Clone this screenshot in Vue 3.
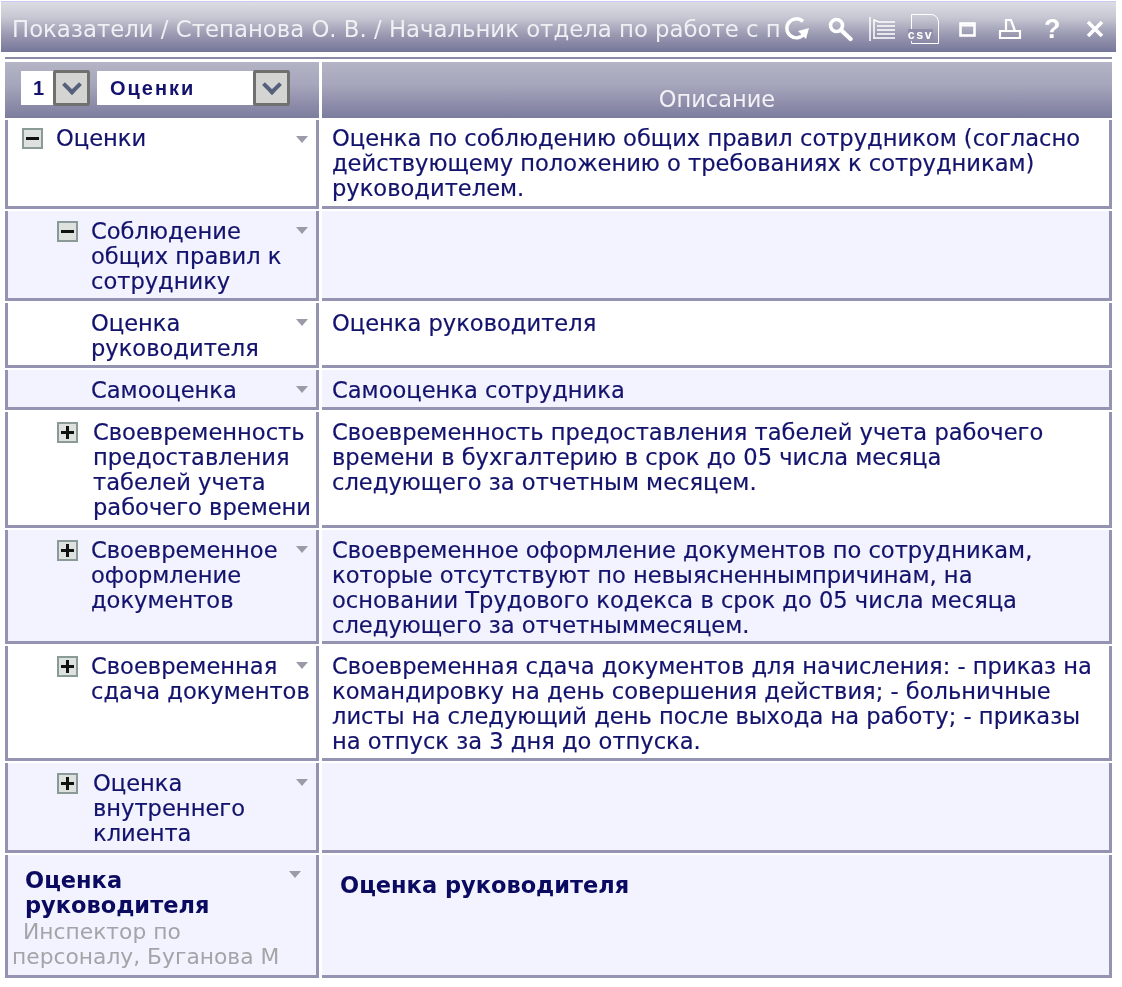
<script setup>
const rows = [
  { h: 89, indent: 0, icon: "minus", first: true, name: ["Оценки"], desc: ["Оценка по соблюдению общих правил сотрудником (согласно", "действующему положению о требованиях к сотрудникам)", "руководителем."] },
  { h: 90, indent: 35, icon: "minus", alt: true, name: ["Соблюдение", "общих правил к", "сотруднику"], desc: [] },
  { h: 65, indent: 35, name: ["Оценка", "руководителя"], desc: ["Оценка руководителя"] },
  { h: 40, indent: 35, alt: true, name: ["Самооценка"], desc: ["Самооценка сотрудника"] },
  { h: 116, indent: 35, icon: "plus", wide: true, name: ["Своевременность", "предоставления", "табелей учета", "рабочего времени"], desc: ["Своевременность предоставления табелей учета рабочего", "времени в бухгалтерию в срок до 05 числа месяца", "следующего за отчетным месяцем."], noArrow: true },
  { h: 114, indent: 35, icon: "plus", alt: true, name: ["Своевременное", "оформление", "документов"], desc: ["Своевременное оформление документов по сотрудникам,", "которые отсутствуют по невыясненнымпричинам, на", "основании Трудового кодекса в срок до 05 числа месяца", "следующего за отчетныммесяцем."] },
  { h: 115, indent: 35, icon: "plus", name: ["Своевременная", "сдача документов"], desc: ["Своевременная сдача документов для начисления: - приказ на", "командировку на день совершения действия; - больничные", "листы на следующий день после выхода на работу; - приказы", "на отпуск за 3 дня до отпуска."] },
  { h: 90, indent: 35, icon: "plus", alt: true, wide: true, name: ["Оценка", "внутреннего", "клиента"], desc: [] },
];
</script>

<template>
  <div class="window">
    <div class="titlebar">
      <span class="title">Показатели / Степанова О. В. / Начальник отдела по работе с п</span>
      <div class="tools">
        <div class="tool">
          <svg width="26" height="26" viewBox="0 0 26 26" fill="none" stroke="#fff" stroke-width="3.4">
            <path d="M19 5.5A9.5 9.5 0 1 0 20 18" />
            <path d="M14 15l11-3-3 11z" fill="#fff" stroke="none" />
          </svg>
        </div>
        <div class="tool">
          <svg width="26" height="26" viewBox="0 0 26 26" fill="none" stroke="#fff" stroke-width="3.6">
            <circle cx="9.5" cy="9.5" r="6" />
            <path d="M14 14l9.5 9" stroke-linecap="round" stroke-width="4.4" />
          </svg>
        </div>
        <div class="tool">
          <svg width="28" height="26" viewBox="0 0 28 26" fill="none" stroke="#fff" stroke-width="1.5">
            <path d="M2 1v24M6 3v20M6 4l5 2h16M9 10h18M9 14h18M9 18h18M6 22h21" />
          </svg>
        </div>
        <div class="tool">
          <div class="csv-icon"><span>csv</span></div>
        </div>
        <div class="tool">
          <svg width="17" height="15" viewBox="0 0 17 15" fill="none" stroke="#fff">
            <rect x="1.5" y="1.5" width="14" height="12" stroke-width="2.6" />
            <path d="M1 3.5h15" stroke-width="2" />
          </svg>
        </div>
        <div class="tool">
          <svg width="24" height="24" viewBox="0 0 24 24" fill="none" stroke="#fff" stroke-width="2.2">
            <path d="M8 14V3h5l4 11M2 14h20v7H2zM5 14h14" />
          </svg>
        </div>
        <div class="tool"><span class="help">?</span></div>
        <div class="tool">
          <svg width="18" height="18" viewBox="0 0 18 18" stroke="#fff" stroke-width="3.6">
            <path d="M2 2l14 14M16 2L2 16" />
          </svg>
        </div>
      </div>
    </div>

    <div class="grid">
      <div class="head head-left">
        <div class="combo combo-num">
          <span>1</span>
          <i class="drop"><b /></i>
        </div>
        <div class="combo combo-name">
          <span>Оценки</span>
          <i class="drop"><b /></i>
        </div>
      </div>
      <div class="head head-right">Описание</div>

      <template v-for="(row, i) in rows" :key="i">
        <div
          class="cell name-cell"
          :class="{ alt: row.alt, first: row.first, wide: row.wide }"
          :style="{ height: row.h + 'px', paddingLeft: row.indent + 14 + 'px' }"
        >
          <span v-if="row.icon" class="tree-btn"><em v-if="row.icon === 'plus'" /></span>
          <span v-else class="tree-gap" />
          <div class="lines">
            <div v-for="line in row.name" :key="line">{{ line }}</div>
          </div>
          <span v-if="!row.noArrow" class="arrow" />
        </div>
        <div class="cell desc-cell" :class="{ alt: row.alt, first: row.first }" :style="{ height: row.h + 'px' }">
          <div v-for="line in row.desc" :key="line">{{ line }}</div>
        </div>
      </template>

      <div class="cell name-cell alt footer-name">
        <div class="footer-title">Оценка<br />руководителя</div>
        <div class="footer-sub"><span class="sub-first">Инспектор по</span><br />персоналу, Буганова М</div>
        <span class="arrow footer-arrow" />
      </div>
      <div class="cell desc-cell alt footer-desc">Оценка руководителя</div>
    </div>
  </div>
</template>

<style scoped>
.window {
  width: 1122px;
  height: 987px;
  background: #fff;
  font-family: "DejaVu Sans", Verdana, sans-serif;
  color: #13136e;
  overflow: hidden;
  filter: blur(0.6px);
}

.titlebar {
  display: flex;
  align-items: center;
  height: 51px;
  width: 1115px;
  margin-left: 1px;
  margin-top: 1px;
  border-top: 1px solid #c8c8f0;
  background: linear-gradient(#dcdce4, #c8c8d4 30%, #9a9ab2 65%, #76769a);
  box-sizing: border-box;
  padding: 4px 0 0 11px;
}

.title {
  flex: none;
  width: 770px;
  white-space: nowrap;
  font-size: 22.8px;
  color: #f0f0f4;
}

.tools {
  display: flex;
  align-items: center;
  margin-left: -6px;
}

.tool {
  display: flex;
  align-items: center;
  justify-content: center;
  width: 42.5px;
}

.csv-icon {
  width: 28px;
  height: 30px;
  border: 1.5px solid #fff;
  border-top-right-radius: 8px;
  box-sizing: border-box;
  position: relative;
  color: #fff;
  font-size: 12.5px;
  font-weight: bold;
  font-family: "Liberation Sans", Arial, sans-serif;
}

.csv-icon span {
  position: absolute;
  left: -4px;
  bottom: 2px;
  background: #8e8eaa;
  line-height: 12px;
  letter-spacing: 1.5px;
}

.help {
  font-size: 27px;
  font-weight: bold;
  color: #fff;
  font-family: "Liberation Sans", Arial, sans-serif;
}

.grid {
  display: grid;
  grid-template-columns: 314px 790px;
  column-gap: 3px;
  row-gap: 2px;
  margin: 5px 0 0 5px;
  padding-top: 3px;
  border-top: 2px solid #8a8aa6;
  width: 1107px;
}

.head {
  height: 56px;
  background: linear-gradient(#b4b4c6, #a6a6bc 40%, #7c7c9e);
  box-sizing: border-box;
}

.head-left {
  display: flex;
  align-items: center;
  padding: 0 0 4px 16px;
}

.head-right {
  padding-top: 24px;
  text-align: center;
  color: #f2f2f6;
  font-size: 22.5px;
}

.combo {
  display: flex;
  align-items: center;
  height: 34px;
  background: #fff;
  font-size: 20px;
  font-weight: bold;
  letter-spacing: 2px;
  font-family: "Liberation Sans", Arial, sans-serif;
}

.combo span {
  flex: 1;
}

.combo-num {
  width: 69px;
  padding-left: 12px;
  box-sizing: border-box;
}

.combo-name {
  width: 193px;
  margin-left: 7px;
  padding-left: 13px;
  box-sizing: border-box;
}

.drop {
  display: flex;
  align-items: center;
  justify-content: center;
  flex: none;
  width: 37px;
  height: 36px;
  box-sizing: border-box;
  border: 3px solid #70706e;
  border-radius: 2px;
  background: #d4d4d2;
}

.drop b {
  display: block;
  width: 10px;
  height: 10px;
  margin-top: -6px;
  border-right: 4px solid #55607c;
  border-bottom: 4px solid #55607c;
  transform: rotate(45deg);
}

.cell {
  box-sizing: border-box;
  border-right: 3px solid #9494b2;
  border-bottom: 3px solid #9494b2;
  font-size: 22.6px;
  line-height: 25px;
  background: #fff;
  overflow: hidden;
  -webkit-text-stroke: 0.2px;
}

.cell.alt {
  background: #f3f3ff;
}

.grid > .cell:nth-child(odd) {
  border-left: 3px solid #9494b2;
}

.name-cell {
  position: relative;
  display: flex;
  align-items: flex-start;
  padding-top: 8px;
  white-space: nowrap;
}

.name-cell.first,
.desc-cell.first {
  padding-top: 6px;
}

.tree-btn {
  position: relative;
  flex: none;
  width: 21px;
  height: 21px;
  margin-top: 2px;
  margin-right: 13px;
  border: 2px solid #8a9a96;
  box-sizing: border-box;
  background: #dde2df;
}

.wide .tree-btn {
  margin-right: 15px;
}

.tree-btn::before {
  content: "";
  position: absolute;
  left: 2px;
  right: 2px;
  top: 6.5px;
  height: 3px;
  background: #111;
}

.tree-btn em {
  position: absolute;
  top: 2px;
  bottom: 2px;
  left: 6.5px;
  width: 3px;
  background: #111;
}

.tree-gap {
  flex: none;
  width: 34px;
}

.arrow {
  position: absolute;
  right: 8px;
  top: 16px;
  border-left: 6px solid transparent;
  border-right: 6px solid transparent;
  border-top: 7px solid #9a9aa8;
}

.desc-cell {
  padding: 8px 0 0 10px;
  white-space: nowrap;
}

.footer-name {
  display: block;
  height: 123px;
  padding: 13px 0 0 4px;
}

.footer-title {
  padding-left: 13px;
  font-weight: bold;
  font-size: 22.5px;
  color: #0a0a60;
  -webkit-text-stroke: 0;
}

.footer-sub {
  margin-top: 1px;
  font-size: 21.8px;
  color: #a4a4a8;
  -webkit-text-stroke: 0;
}

.sub-first {
  padding-left: 11px;
}

.footer-arrow {
  right: 15px;
  top: 16px;
}

.footer-desc {
  height: 123px;
  padding: 18px 0 0 18px;
  font-weight: bold;
  font-size: 22.5px;
  color: #0a0a60;
  -webkit-text-stroke: 0;
}
</style>
